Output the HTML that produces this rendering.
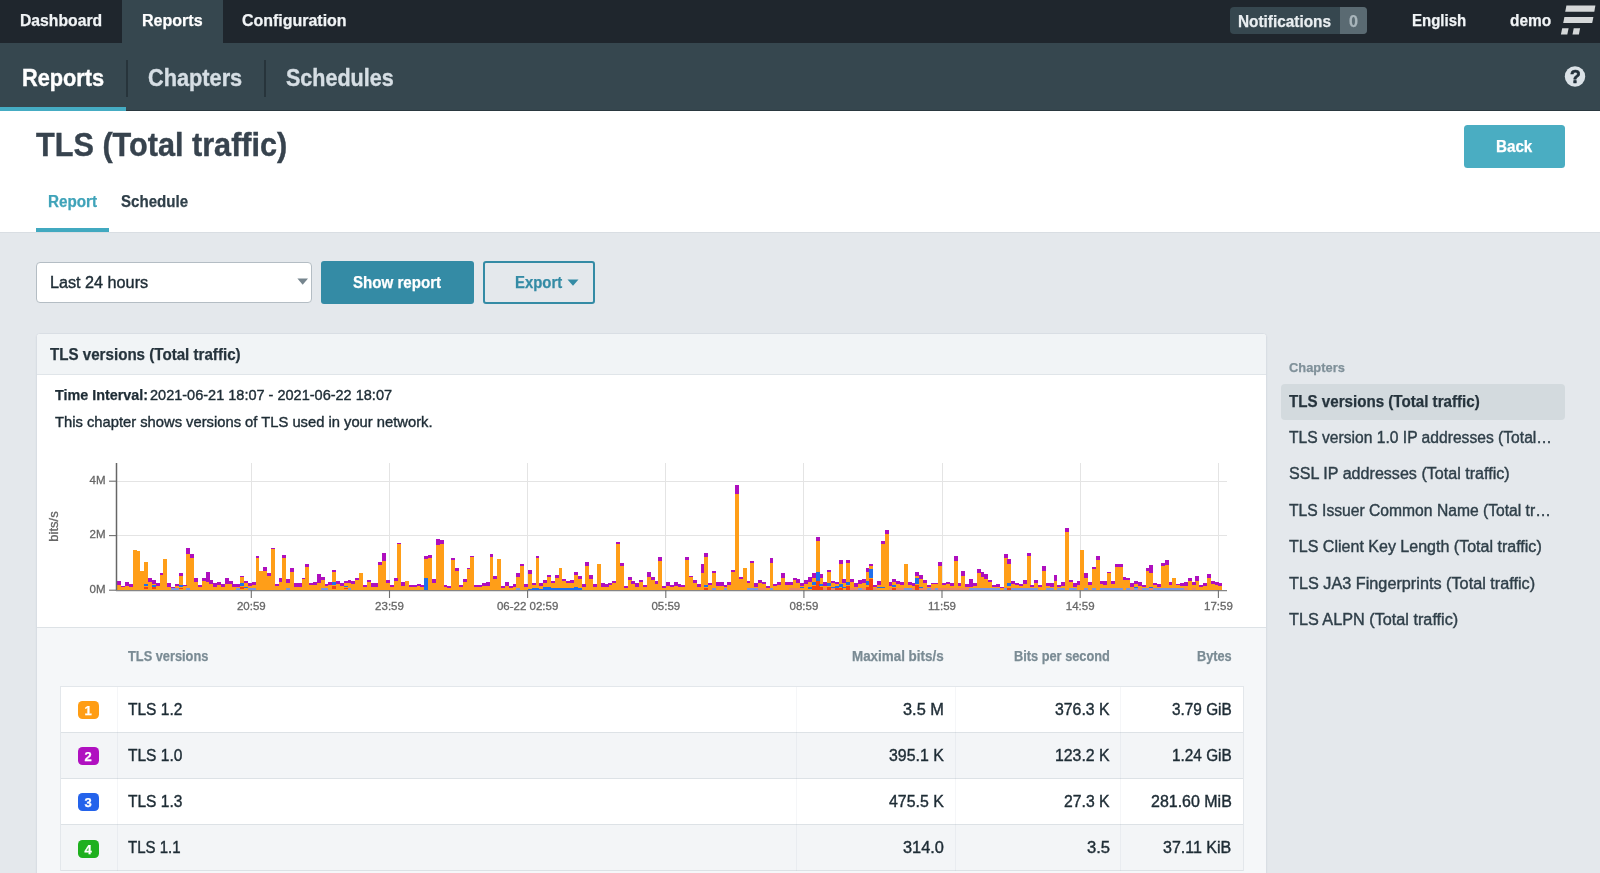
<!DOCTYPE html>
<html lang="en">
<head>
<meta charset="utf-8">
<title>TLS (Total traffic)</title>
<style>
*{box-sizing:border-box;margin:0;padding:0}
html,body{width:1600px;height:873px;overflow:hidden}
body{position:relative;background:#e4e8ec;font-family:"Liberation Sans",sans-serif;color:#2f3f49}
.a{position:absolute}
.t{position:absolute;white-space:nowrap;line-height:normal;transform-origin:0 0;font-family:"Liberation Sans",sans-serif}
#top{left:0;top:0;width:1600px;height:43px;background:#1f262d}
#top-act{left:122px;top:0;width:100.5px;height:43px;background:#36474f}
#notif{left:1229.5px;top:7px;width:137.5px;height:26.5px;border-radius:4px;background:#36474f;overflow:hidden}
#notif i{position:absolute;left:110.5px;top:0;width:27px;height:27px;background:#5a6a72}
#sub{left:0;top:43px;width:1600px;height:67.5px;background:#36474f;box-shadow:inset 0 -1px 0 #2a383f}
#sub-ul{left:0;top:107px;width:126px;height:3.5px;background:#45acc3}
.dv{top:60px;width:2px;height:37px;background:#27343b}
#hd{left:0;top:110.5px;width:1600px;height:122px;background:#fff;border-bottom:1px solid #d9dee3}
#back{left:1464px;top:125px;width:101px;height:43px;border-radius:3.5px;background:#4aadc2}
#tab-ul{left:36px;top:228px;width:73px;height:4px;background:#41a9c0}
#sel{left:36px;top:262px;width:276px;height:40.5px;border:1px solid #b4bdc4;border-radius:4px;background:#fff}
#show{left:321px;top:261px;width:153px;height:43px;border-radius:3px;background:#348ba5}
#exp{left:483px;top:261px;width:111.5px;height:43px;border-radius:3px;border:2px solid #348ba5;background:transparent}
#panel{left:36px;top:333px;width:1230.5px;height:560px;border:1px solid #d9dee4;border-radius:4px;background:#fff;overflow:hidden;box-shadow:0 1px 2px rgba(40,60,70,.06)}
#phead{left:0;top:0;width:1230px;height:41px;background:#f1f4f6;border-bottom:1px solid #e0e5e9}
#tarea{left:0;top:293px;width:1230px;height:300px;background:#f5f7f9;border-top:1.5px solid #dde2e6}
#tbl{left:60px;top:686px;width:1183.5px;height:185px;border:1px solid #e3e7eb;border-bottom:0;background:#fff}
.row{left:0;width:100%;height:46px;border-bottom:1px solid #dde2e6}
.alt{background:#f3f5f7}
.cs{top:0;width:1px;height:184px;background:rgba(120,140,155,.075)}
.bdg{width:21px;height:18px;border-radius:4.5px}
#side-act{left:1280.5px;top:383.5px;width:284.5px;height:36px;border-radius:4px;background:#d3dade}
</style>
</head>
<body>
<div class="a" id="top"></div>
<div class="a" id="top-act"></div>
<div class="a" id="notif"><i></i></div>
<svg class="a" style="left:1558px;top:3px" width="40" height="34" viewBox="0 0 40 34">
  <g fill="#d5d8d9">
    <polygon points="8.4,2.4 37.4,2.4 36.3,8.8 7.2,8.8"/>
    <polygon points="6.4,14 35.4,14 34.2,19.9 5.2,19.9"/>
    <polygon points="4.2,25.3 10.6,25.3 9.3,31.5 2.9,31.5"/>
    <polygon points="15.7,25.3 22.1,25.3 20.9,31.5 14.5,31.5"/>
  </g>
</svg>
<div class="a" id="sub"></div>
<div class="a" id="sub-ul"></div>
<div class="a dv" style="left:126px"></div>
<div class="a dv" style="left:264px"></div>
<svg class="a" style="left:1564px;top:66px;will-change:transform" width="22" height="22" viewBox="0 0 22 22">
  <circle cx="11" cy="10.5" r="10.2" fill="#dbe2e7"/>
  <text x="11.3" y="17" text-anchor="middle" font-family="Liberation Sans, sans-serif" font-weight="bold" font-size="17.5" fill="#22303a" stroke="#22303a" stroke-width="0.7" stroke-linejoin="round">?</text>
</svg>
<div class="a" id="hd"></div>
<div class="a" id="back"></div>
<div class="a" id="tab-ul"></div>
<div class="a" id="sel"></div>
<svg class="a" style="left:297px;top:278px" width="12" height="8" viewBox="0 0 12 8"><polygon points="0.4,0.6 11,0.6 5.7,6.7" fill="#76858e"/></svg>
<div class="a" id="show"></div>
<div class="a" id="exp"></div>
<svg class="a" style="left:566.5px;top:279px" width="12" height="8" viewBox="0 0 12 8"><polygon points="0.5,0.4 11.5,0.4 6,6.8" fill="#348ba5"/></svg>
<div class="a" id="panel">
  <div class="a" id="phead"></div>
  <div class="a" id="tarea"></div>
</div>
<div class="a" id="tbl">
  <div class="a row" style="top:0"></div>
  <div class="a row alt" style="top:46px"></div>
  <div class="a row" style="top:92px"></div>
  <div class="a row alt" style="top:138px"></div>
  <div class="a cs" style="left:55.5px"></div>
  <div class="a cs" style="left:734.5px"></div>
  <div class="a cs" style="left:893.5px"></div>
  <div class="a cs" style="left:1059px"></div>
</div>
<div class="a bdg" style="left:77.7px;top:701px;background:#ff9d14"></div>
<div class="a bdg" style="left:77.7px;top:747px;background:#b010c0"></div>
<div class="a bdg" style="left:77.7px;top:793px;background:#2463eb"></div>
<div class="a bdg" style="left:77.7px;top:839.5px;background:#1eb01e"></div>
<div class="a" id="side-act"></div>
<svg class="a" style="left:36px;top:450px;will-change:transform" width="1234" height="176" viewBox="36 450 1234 176" shape-rendering="crispEdges"><path d="M251.3 463V590" stroke="#e4e4e4" stroke-width="1"/><path d="M389.5 463V590" stroke="#e4e4e4" stroke-width="1"/><path d="M527.6 463V590" stroke="#e4e4e4" stroke-width="1"/><path d="M665.8 463V590" stroke="#e4e4e4" stroke-width="1"/><path d="M803.9 463V590" stroke="#e4e4e4" stroke-width="1"/><path d="M942.0 463V590" stroke="#e4e4e4" stroke-width="1"/><path d="M1080.2 463V590" stroke="#e4e4e4" stroke-width="1"/><path d="M1218.4 463V590" stroke="#e4e4e4" stroke-width="1"/><path d="M116 481.2H1227" stroke="#e4e4e4" stroke-width="1"/><path d="M116 535.6H1227" stroke="#e4e4e4" stroke-width="1"/><g><rect x="117.40" y="585.00" width="3.89" height="5.00" fill="#ff9e18"/><rect x="121.24" y="586.88" width="3.89" height="3.12" fill="#ff9e18"/><rect x="125.07" y="585.62" width="3.89" height="4.38" fill="#ff9e18"/><rect x="128.91" y="586.88" width="3.89" height="3.12" fill="#ff9e18"/><rect x="132.75" y="550.00" width="3.89" height="40.00" fill="#ff9e18"/><rect x="136.58" y="551.25" width="3.89" height="38.75" fill="#ff9e18"/><rect x="140.42" y="570.62" width="3.89" height="19.38" fill="#ff9e18"/><rect x="144.26" y="561.50" width="3.89" height="28.50" fill="#ff9e18"/><rect x="148.09" y="581.88" width="3.89" height="8.12" fill="#ff9e18"/><rect x="151.93" y="583.75" width="3.89" height="6.25" fill="#ff9e18"/><rect x="155.76" y="586.25" width="3.89" height="3.75" fill="#ff9e18"/><rect x="159.60" y="574.62" width="3.89" height="15.38" fill="#ff9e18"/><rect x="163.44" y="559.38" width="3.89" height="30.62" fill="#ff9e18"/><rect x="167.27" y="586.88" width="3.89" height="3.12" fill="#ff9e18"/><rect x="171.11" y="587.50" width="3.89" height="2.50" fill="#ff9e18"/><rect x="174.95" y="586.25" width="3.89" height="3.75" fill="#ff9e18"/><rect x="178.78" y="576.25" width="3.89" height="13.75" fill="#ff9e18"/><rect x="182.62" y="586.25" width="3.89" height="3.75" fill="#ff9e18"/><rect x="186.46" y="553.50" width="3.89" height="36.50" fill="#ff9e18"/><rect x="190.29" y="558.12" width="3.89" height="31.88" fill="#ff9e18"/><rect x="194.13" y="581.88" width="3.89" height="8.12" fill="#ff9e18"/><rect x="197.97" y="587.12" width="3.89" height="2.88" fill="#ff9e18"/><rect x="201.80" y="580.62" width="3.89" height="9.38" fill="#ff9e18"/><rect x="205.64" y="581.88" width="3.89" height="8.12" fill="#ff9e18"/><rect x="209.47" y="583.75" width="3.89" height="6.25" fill="#ff9e18"/><rect x="213.31" y="586.88" width="3.89" height="3.12" fill="#ff9e18"/><rect x="217.15" y="585.00" width="3.89" height="5.00" fill="#ff9e18"/><rect x="220.98" y="586.88" width="3.89" height="3.12" fill="#ff9e18"/><rect x="224.82" y="584.38" width="3.89" height="5.62" fill="#ff9e18"/><rect x="228.66" y="584.38" width="3.89" height="5.62" fill="#ff9e18"/><rect x="232.49" y="586.88" width="3.89" height="3.12" fill="#ff9e18"/><rect x="236.33" y="586.88" width="3.89" height="3.12" fill="#ff9e18"/><rect x="240.17" y="576.88" width="3.89" height="13.12" fill="#ff9e18"/><rect x="244.00" y="583.12" width="3.89" height="6.88" fill="#ff9e18"/><rect x="247.84" y="585.62" width="3.89" height="4.38" fill="#ff9e18"/><rect x="251.68" y="585.00" width="3.89" height="5.00" fill="#ff9e18"/><rect x="255.51" y="557.88" width="3.89" height="32.12" fill="#ff9e18"/><rect x="259.35" y="570.62" width="3.89" height="19.38" fill="#ff9e18"/><rect x="263.19" y="570.62" width="3.89" height="19.38" fill="#ff9e18"/><rect x="267.02" y="575.88" width="3.89" height="14.12" fill="#ff9e18"/><rect x="270.86" y="548.75" width="3.89" height="41.25" fill="#ff9e18"/><rect x="274.69" y="586.25" width="3.89" height="3.75" fill="#ff9e18"/><rect x="278.53" y="581.88" width="3.89" height="8.12" fill="#ff9e18"/><rect x="282.37" y="557.88" width="3.89" height="32.12" fill="#ff9e18"/><rect x="286.20" y="583.12" width="3.89" height="6.88" fill="#ff9e18"/><rect x="290.04" y="571.50" width="3.89" height="18.50" fill="#ff9e18"/><rect x="293.88" y="586.88" width="3.89" height="3.12" fill="#ff9e18"/><rect x="297.71" y="586.88" width="3.89" height="3.12" fill="#ff9e18"/><rect x="301.55" y="579.38" width="3.89" height="10.62" fill="#ff9e18"/><rect x="305.39" y="566.88" width="3.89" height="23.12" fill="#ff9e18"/><rect x="309.22" y="585.00" width="3.89" height="5.00" fill="#ff9e18"/><rect x="313.06" y="585.00" width="3.89" height="5.00" fill="#ff9e18"/><rect x="316.90" y="583.12" width="3.89" height="6.88" fill="#ff9e18"/><rect x="320.73" y="580.00" width="3.89" height="10.00" fill="#ff9e18"/><rect x="324.57" y="585.62" width="3.89" height="4.38" fill="#ff9e18"/><rect x="328.41" y="585.00" width="3.89" height="5.00" fill="#ff9e18"/><rect x="332.24" y="571.88" width="3.89" height="18.12" fill="#ff9e18"/><rect x="336.08" y="584.38" width="3.89" height="5.62" fill="#ff9e18"/><rect x="339.91" y="585.62" width="3.89" height="4.38" fill="#ff9e18"/><rect x="343.75" y="583.12" width="3.89" height="6.88" fill="#ff9e18"/><rect x="347.59" y="583.12" width="3.89" height="6.88" fill="#ff9e18"/><rect x="351.42" y="583.75" width="3.89" height="6.25" fill="#ff9e18"/><rect x="355.26" y="579.62" width="3.89" height="10.38" fill="#ff9e18"/><rect x="359.10" y="573.12" width="3.89" height="16.88" fill="#ff9e18"/><rect x="362.93" y="586.88" width="3.89" height="3.12" fill="#ff9e18"/><rect x="366.77" y="581.88" width="3.89" height="8.12" fill="#ff9e18"/><rect x="370.61" y="586.88" width="3.89" height="3.12" fill="#ff9e18"/><rect x="374.44" y="586.88" width="3.89" height="3.12" fill="#ff9e18"/><rect x="378.28" y="564.62" width="3.89" height="25.38" fill="#ff9e18"/><rect x="382.12" y="561.25" width="3.89" height="28.75" fill="#ff9e18"/><rect x="385.95" y="583.12" width="3.89" height="6.88" fill="#ff9e18"/><rect x="389.79" y="587.12" width="3.89" height="2.88" fill="#ff9e18"/><rect x="393.62" y="580.88" width="3.89" height="9.12" fill="#ff9e18"/><rect x="397.46" y="544.38" width="3.89" height="45.62" fill="#ff9e18"/><rect x="401.30" y="586.25" width="3.89" height="3.75" fill="#ff9e18"/><rect x="405.13" y="581.25" width="3.89" height="8.75" fill="#ff9e18"/><rect x="408.97" y="587.12" width="3.89" height="2.88" fill="#ff9e18"/><rect x="412.81" y="587.12" width="3.89" height="2.88" fill="#ff9e18"/><rect x="416.64" y="586.25" width="3.89" height="3.75" fill="#ff9e18"/><rect x="420.48" y="586.88" width="3.89" height="3.12" fill="#ff9e18"/><rect x="424.32" y="559.38" width="3.89" height="30.62" fill="#ff9e18"/><rect x="428.15" y="558.12" width="3.89" height="31.88" fill="#ff9e18"/><rect x="431.99" y="582.50" width="3.89" height="7.50" fill="#ff9e18"/><rect x="435.83" y="545.38" width="3.89" height="44.62" fill="#ff9e18"/><rect x="439.66" y="544.12" width="3.89" height="45.88" fill="#ff9e18"/><rect x="443.50" y="586.88" width="3.89" height="3.12" fill="#ff9e18"/><rect x="447.34" y="587.50" width="3.89" height="2.50" fill="#ff9e18"/><rect x="451.17" y="560.38" width="3.89" height="29.62" fill="#ff9e18"/><rect x="455.01" y="571.25" width="3.89" height="18.75" fill="#ff9e18"/><rect x="458.84" y="586.88" width="3.89" height="3.12" fill="#ff9e18"/><rect x="462.68" y="581.88" width="3.89" height="8.12" fill="#ff9e18"/><rect x="466.52" y="568.75" width="3.89" height="21.25" fill="#ff9e18"/><rect x="470.35" y="556.88" width="3.89" height="33.12" fill="#ff9e18"/><rect x="474.19" y="586.88" width="3.89" height="3.12" fill="#ff9e18"/><rect x="478.03" y="586.88" width="3.89" height="3.12" fill="#ff9e18"/><rect x="481.86" y="585.62" width="3.89" height="4.38" fill="#ff9e18"/><rect x="485.70" y="585.62" width="3.89" height="4.38" fill="#ff9e18"/><rect x="489.54" y="556.88" width="3.89" height="33.12" fill="#ff9e18"/><rect x="493.37" y="579.38" width="3.89" height="10.62" fill="#ff9e18"/><rect x="497.21" y="559.38" width="3.89" height="30.62" fill="#ff9e18"/><rect x="501.05" y="587.50" width="3.89" height="2.50" fill="#ff9e18"/><rect x="504.88" y="585.62" width="3.89" height="4.38" fill="#ff9e18"/><rect x="508.72" y="587.50" width="3.89" height="2.50" fill="#ff9e18"/><rect x="512.56" y="586.88" width="3.89" height="3.12" fill="#ff9e18"/><rect x="516.39" y="576.88" width="3.89" height="13.12" fill="#ff9e18"/><rect x="520.23" y="565.62" width="3.89" height="24.38" fill="#ff9e18"/><rect x="524.06" y="586.88" width="3.89" height="3.12" fill="#ff9e18"/><rect x="527.90" y="573.75" width="3.89" height="16.25" fill="#ff9e18"/><rect x="531.74" y="585.00" width="3.89" height="5.00" fill="#ff9e18"/><rect x="535.57" y="557.88" width="3.89" height="32.12" fill="#ff9e18"/><rect x="539.41" y="586.25" width="3.89" height="3.75" fill="#ff9e18"/><rect x="543.25" y="583.12" width="3.89" height="6.88" fill="#ff9e18"/><rect x="547.08" y="577.12" width="3.89" height="12.88" fill="#ff9e18"/><rect x="550.92" y="582.88" width="3.89" height="7.12" fill="#ff9e18"/><rect x="554.76" y="578.12" width="3.89" height="11.88" fill="#ff9e18"/><rect x="558.59" y="567.50" width="3.89" height="22.50" fill="#ff9e18"/><rect x="562.43" y="580.62" width="3.89" height="9.38" fill="#ff9e18"/><rect x="566.27" y="583.38" width="3.89" height="6.62" fill="#ff9e18"/><rect x="570.10" y="582.50" width="3.89" height="7.50" fill="#ff9e18"/><rect x="573.94" y="574.62" width="3.89" height="15.38" fill="#ff9e18"/><rect x="577.77" y="579.38" width="3.89" height="10.62" fill="#ff9e18"/><rect x="581.61" y="586.88" width="3.89" height="3.12" fill="#ff9e18"/><rect x="585.45" y="565.62" width="3.89" height="24.38" fill="#ff9e18"/><rect x="589.28" y="579.38" width="3.89" height="10.62" fill="#ff9e18"/><rect x="593.12" y="586.88" width="3.89" height="3.12" fill="#ff9e18"/><rect x="596.96" y="564.00" width="3.89" height="26.00" fill="#ff9e18"/><rect x="600.79" y="586.62" width="3.89" height="3.38" fill="#ff9e18"/><rect x="604.63" y="586.62" width="3.89" height="3.38" fill="#ff9e18"/><rect x="608.47" y="585.00" width="3.89" height="5.00" fill="#ff9e18"/><rect x="612.30" y="583.12" width="3.89" height="6.88" fill="#ff9e18"/><rect x="616.14" y="544.38" width="3.89" height="45.62" fill="#ff9e18"/><rect x="619.98" y="565.62" width="3.89" height="24.38" fill="#ff9e18"/><rect x="623.81" y="587.50" width="3.89" height="2.50" fill="#ff9e18"/><rect x="627.65" y="579.62" width="3.89" height="10.38" fill="#ff9e18"/><rect x="631.49" y="584.38" width="3.89" height="5.62" fill="#ff9e18"/><rect x="635.32" y="586.62" width="3.89" height="3.38" fill="#ff9e18"/><rect x="639.16" y="581.88" width="3.89" height="8.12" fill="#ff9e18"/><rect x="642.99" y="587.12" width="3.89" height="2.88" fill="#ff9e18"/><rect x="646.83" y="576.88" width="3.89" height="13.12" fill="#ff9e18"/><rect x="650.67" y="580.00" width="3.89" height="10.00" fill="#ff9e18"/><rect x="654.50" y="583.75" width="3.89" height="6.25" fill="#ff9e18"/><rect x="658.34" y="561.25" width="3.89" height="28.75" fill="#ff9e18"/><rect x="662.18" y="588.12" width="3.89" height="1.88" fill="#ff9e18"/><rect x="666.01" y="585.62" width="3.89" height="4.38" fill="#ff9e18"/><rect x="669.85" y="587.12" width="3.89" height="2.88" fill="#ff9e18"/><rect x="673.69" y="585.62" width="3.89" height="4.38" fill="#ff9e18"/><rect x="677.52" y="586.62" width="3.89" height="3.38" fill="#ff9e18"/><rect x="681.36" y="587.12" width="3.89" height="2.88" fill="#ff9e18"/><rect x="685.20" y="560.38" width="3.89" height="29.62" fill="#ff9e18"/><rect x="689.03" y="576.88" width="3.89" height="13.12" fill="#ff9e18"/><rect x="692.87" y="582.50" width="3.89" height="7.50" fill="#ff9e18"/><rect x="696.71" y="586.88" width="3.89" height="3.12" fill="#ff9e18"/><rect x="700.54" y="572.50" width="3.89" height="17.50" fill="#ff9e18"/><rect x="704.38" y="556.88" width="3.89" height="33.12" fill="#ff9e18"/><rect x="708.21" y="585.00" width="3.89" height="5.00" fill="#ff9e18"/><rect x="712.05" y="573.12" width="3.89" height="16.88" fill="#ff9e18"/><rect x="715.89" y="585.62" width="3.89" height="4.38" fill="#ff9e18"/><rect x="719.72" y="585.62" width="3.89" height="4.38" fill="#ff9e18"/><rect x="723.56" y="586.88" width="3.89" height="3.12" fill="#ff9e18"/><rect x="727.40" y="585.00" width="3.89" height="5.00" fill="#ff9e18"/><rect x="731.23" y="571.62" width="3.89" height="18.38" fill="#ff9e18"/><rect x="735.07" y="493.62" width="3.89" height="96.38" fill="#ff9e18"/><rect x="738.91" y="579.38" width="3.89" height="10.62" fill="#ff9e18"/><rect x="742.74" y="567.50" width="3.89" height="22.50" fill="#ff9e18"/><rect x="746.58" y="582.88" width="3.89" height="7.12" fill="#ff9e18"/><rect x="750.42" y="562.50" width="3.89" height="27.50" fill="#ff9e18"/><rect x="754.25" y="586.88" width="3.89" height="3.12" fill="#ff9e18"/><rect x="758.09" y="582.88" width="3.89" height="7.12" fill="#ff9e18"/><rect x="761.92" y="583.75" width="3.89" height="6.25" fill="#ff9e18"/><rect x="765.76" y="587.50" width="3.89" height="2.50" fill="#ff9e18"/><rect x="769.60" y="562.50" width="3.89" height="27.50" fill="#ff9e18"/><rect x="773.43" y="585.62" width="3.89" height="4.38" fill="#ff9e18"/><rect x="777.27" y="585.00" width="3.89" height="5.00" fill="#ff9e18"/><rect x="781.11" y="577.50" width="3.89" height="12.50" fill="#ff9e18"/><rect x="784.94" y="585.00" width="3.89" height="5.00" fill="#ff9e18"/><rect x="788.78" y="585.00" width="3.89" height="5.00" fill="#ff9e18"/><rect x="792.62" y="579.62" width="3.89" height="10.38" fill="#ff9e18"/><rect x="796.45" y="583.12" width="3.89" height="6.88" fill="#ff9e18"/><rect x="800.29" y="585.62" width="3.89" height="4.38" fill="#ff9e18"/><rect x="804.13" y="583.75" width="3.89" height="6.25" fill="#ff9e18"/><rect x="807.96" y="581.88" width="3.89" height="8.12" fill="#ff9e18"/><rect x="811.80" y="577.50" width="3.89" height="12.50" fill="#ff9e18"/><rect x="815.64" y="541.25" width="3.89" height="48.75" fill="#ff9e18"/><rect x="819.47" y="578.12" width="3.89" height="11.88" fill="#ff9e18"/><rect x="823.31" y="585.62" width="3.89" height="4.38" fill="#ff9e18"/><rect x="827.14" y="571.88" width="3.89" height="18.12" fill="#ff9e18"/><rect x="830.98" y="583.12" width="3.89" height="6.88" fill="#ff9e18"/><rect x="834.82" y="583.75" width="3.89" height="6.25" fill="#ff9e18"/><rect x="838.65" y="563.75" width="3.89" height="26.25" fill="#ff9e18"/><rect x="842.49" y="582.50" width="3.89" height="7.50" fill="#ff9e18"/><rect x="846.33" y="562.50" width="3.89" height="27.50" fill="#ff9e18"/><rect x="850.16" y="581.88" width="3.89" height="8.12" fill="#ff9e18"/><rect x="854.00" y="586.62" width="3.89" height="3.38" fill="#ff9e18"/><rect x="857.84" y="583.75" width="3.89" height="6.25" fill="#ff9e18"/><rect x="861.67" y="583.12" width="3.89" height="6.88" fill="#ff9e18"/><rect x="865.51" y="571.62" width="3.89" height="18.38" fill="#ff9e18"/><rect x="869.35" y="565.62" width="3.89" height="24.38" fill="#ff9e18"/><rect x="873.18" y="586.62" width="3.89" height="3.38" fill="#ff9e18"/><rect x="877.02" y="585.00" width="3.89" height="5.00" fill="#ff9e18"/><rect x="880.86" y="544.38" width="3.89" height="45.62" fill="#ff9e18"/><rect x="884.69" y="534.38" width="3.89" height="55.62" fill="#ff9e18"/><rect x="888.53" y="585.62" width="3.89" height="4.38" fill="#ff9e18"/><rect x="892.36" y="581.88" width="3.89" height="8.12" fill="#ff9e18"/><rect x="896.20" y="583.75" width="3.89" height="6.25" fill="#ff9e18"/><rect x="900.04" y="585.00" width="3.89" height="5.00" fill="#ff9e18"/><rect x="903.87" y="564.00" width="3.89" height="26.00" fill="#ff9e18"/><rect x="907.71" y="585.00" width="3.89" height="5.00" fill="#ff9e18"/><rect x="911.55" y="585.62" width="3.89" height="4.38" fill="#ff9e18"/><rect x="915.38" y="576.25" width="3.89" height="13.75" fill="#ff9e18"/><rect x="919.22" y="578.75" width="3.89" height="11.25" fill="#ff9e18"/><rect x="923.06" y="583.12" width="3.89" height="6.88" fill="#ff9e18"/><rect x="926.89" y="586.88" width="3.89" height="3.12" fill="#ff9e18"/><rect x="930.73" y="584.38" width="3.89" height="5.62" fill="#ff9e18"/><rect x="934.57" y="584.38" width="3.89" height="5.62" fill="#ff9e18"/><rect x="938.40" y="566.25" width="3.89" height="23.75" fill="#ff9e18"/><rect x="942.24" y="585.00" width="3.89" height="5.00" fill="#ff9e18"/><rect x="946.07" y="583.75" width="3.89" height="6.25" fill="#ff9e18"/><rect x="949.91" y="586.25" width="3.89" height="3.75" fill="#ff9e18"/><rect x="953.75" y="560.62" width="3.89" height="29.38" fill="#ff9e18"/><rect x="957.58" y="586.25" width="3.89" height="3.75" fill="#ff9e18"/><rect x="961.42" y="576.25" width="3.89" height="13.75" fill="#ff9e18"/><rect x="965.26" y="587.12" width="3.89" height="2.88" fill="#ff9e18"/><rect x="969.09" y="586.62" width="3.89" height="3.38" fill="#ff9e18"/><rect x="972.93" y="586.25" width="3.89" height="3.75" fill="#ff9e18"/><rect x="976.77" y="572.75" width="3.89" height="17.25" fill="#ff9e18"/><rect x="980.60" y="576.88" width="3.89" height="13.12" fill="#ff9e18"/><rect x="984.44" y="578.75" width="3.89" height="11.25" fill="#ff9e18"/><rect x="988.28" y="581.88" width="3.89" height="8.12" fill="#ff9e18"/><rect x="992.11" y="586.62" width="3.89" height="3.38" fill="#ff9e18"/><rect x="995.95" y="587.12" width="3.89" height="2.88" fill="#ff9e18"/><rect x="999.79" y="587.88" width="3.89" height="2.12" fill="#ff9e18"/><rect x="1003.62" y="558.12" width="3.89" height="31.88" fill="#ff9e18"/><rect x="1007.46" y="563.75" width="3.89" height="26.25" fill="#ff9e18"/><rect x="1011.29" y="584.38" width="3.89" height="5.62" fill="#ff9e18"/><rect x="1015.13" y="585.25" width="3.89" height="4.75" fill="#ff9e18"/><rect x="1018.97" y="585.62" width="3.89" height="4.38" fill="#ff9e18"/><rect x="1022.80" y="583.75" width="3.89" height="6.25" fill="#ff9e18"/><rect x="1026.64" y="555.88" width="3.89" height="34.12" fill="#ff9e18"/><rect x="1030.48" y="586.88" width="3.89" height="3.12" fill="#ff9e18"/><rect x="1034.31" y="583.12" width="3.89" height="6.88" fill="#ff9e18"/><rect x="1038.15" y="586.62" width="3.89" height="3.38" fill="#ff9e18"/><rect x="1041.99" y="570.62" width="3.89" height="19.38" fill="#ff9e18"/><rect x="1045.82" y="586.25" width="3.89" height="3.75" fill="#ff9e18"/><rect x="1049.66" y="586.62" width="3.89" height="3.38" fill="#ff9e18"/><rect x="1053.50" y="580.62" width="3.89" height="9.38" fill="#ff9e18"/><rect x="1057.33" y="586.62" width="3.89" height="3.38" fill="#ff9e18"/><rect x="1061.17" y="585.62" width="3.89" height="4.38" fill="#ff9e18"/><rect x="1065.01" y="532.12" width="3.89" height="57.88" fill="#ff9e18"/><rect x="1068.84" y="581.88" width="3.89" height="8.12" fill="#ff9e18"/><rect x="1072.68" y="586.88" width="3.89" height="3.12" fill="#ff9e18"/><rect x="1076.51" y="585.00" width="3.89" height="5.00" fill="#ff9e18"/><rect x="1080.35" y="550.00" width="3.89" height="40.00" fill="#ff9e18"/><rect x="1084.19" y="577.50" width="3.89" height="12.50" fill="#ff9e18"/><rect x="1088.02" y="585.00" width="3.89" height="5.00" fill="#ff9e18"/><rect x="1091.86" y="569.38" width="3.89" height="20.62" fill="#ff9e18"/><rect x="1095.70" y="560.38" width="3.89" height="29.62" fill="#ff9e18"/><rect x="1099.53" y="584.38" width="3.89" height="5.62" fill="#ff9e18"/><rect x="1103.37" y="585.00" width="3.89" height="5.00" fill="#ff9e18"/><rect x="1107.21" y="572.75" width="3.89" height="17.25" fill="#ff9e18"/><rect x="1111.04" y="584.38" width="3.89" height="5.62" fill="#ff9e18"/><rect x="1114.88" y="566.88" width="3.89" height="23.12" fill="#ff9e18"/><rect x="1118.72" y="566.88" width="3.89" height="23.12" fill="#ff9e18"/><rect x="1122.55" y="580.00" width="3.89" height="10.00" fill="#ff9e18"/><rect x="1126.39" y="580.00" width="3.89" height="10.00" fill="#ff9e18"/><rect x="1130.22" y="586.88" width="3.89" height="3.12" fill="#ff9e18"/><rect x="1134.06" y="584.38" width="3.89" height="5.62" fill="#ff9e18"/><rect x="1137.90" y="585.62" width="3.89" height="4.38" fill="#ff9e18"/><rect x="1141.73" y="587.12" width="3.89" height="2.88" fill="#ff9e18"/><rect x="1145.57" y="571.25" width="3.89" height="18.75" fill="#ff9e18"/><rect x="1149.41" y="572.50" width="3.89" height="17.50" fill="#ff9e18"/><rect x="1153.24" y="585.00" width="3.89" height="5.00" fill="#ff9e18"/><rect x="1157.08" y="586.62" width="3.89" height="3.38" fill="#ff9e18"/><rect x="1160.92" y="565.62" width="3.89" height="24.38" fill="#ff9e18"/><rect x="1164.75" y="564.62" width="3.89" height="25.38" fill="#ff9e18"/><rect x="1168.59" y="585.00" width="3.89" height="5.00" fill="#ff9e18"/><rect x="1172.43" y="577.75" width="3.89" height="12.25" fill="#ff9e18"/><rect x="1176.26" y="585.25" width="3.89" height="4.75" fill="#ff9e18"/><rect x="1180.10" y="586.25" width="3.89" height="3.75" fill="#ff9e18"/><rect x="1183.94" y="585.62" width="3.89" height="4.38" fill="#ff9e18"/><rect x="1187.77" y="580.62" width="3.89" height="9.38" fill="#ff9e18"/><rect x="1191.61" y="585.25" width="3.89" height="4.75" fill="#ff9e18"/><rect x="1195.44" y="580.62" width="3.89" height="9.38" fill="#ff9e18"/><rect x="1199.28" y="587.12" width="3.89" height="2.88" fill="#ff9e18"/><rect x="1203.12" y="586.25" width="3.89" height="3.75" fill="#ff9e18"/><rect x="1206.95" y="578.38" width="3.89" height="11.62" fill="#ff9e18"/><rect x="1210.79" y="584.38" width="3.89" height="5.62" fill="#ff9e18"/><rect x="1214.63" y="585.00" width="3.89" height="5.00" fill="#ff9e18"/><rect x="1218.46" y="585.62" width="3.89" height="4.38" fill="#ff9e18"/><rect x="117.40" y="580.88" width="3.89" height="4.12" fill="#ae0fbe"/><rect x="121.24" y="585.62" width="3.89" height="1.25" fill="#ae0fbe"/><rect x="125.07" y="581.88" width="3.89" height="3.75" fill="#ae0fbe"/><rect x="128.91" y="584.38" width="3.89" height="2.50" fill="#ae0fbe"/><rect x="148.09" y="577.50" width="3.89" height="4.38" fill="#ae0fbe"/><rect x="151.93" y="579.62" width="3.89" height="4.12" fill="#ae0fbe"/><rect x="155.76" y="583.12" width="3.89" height="3.12" fill="#ae0fbe"/><rect x="159.60" y="572.75" width="3.89" height="1.88" fill="#ae0fbe"/><rect x="167.27" y="583.12" width="3.89" height="3.75" fill="#ae0fbe"/><rect x="171.11" y="586.62" width="3.89" height="0.88" fill="#ae0fbe"/><rect x="174.95" y="584.38" width="3.89" height="1.88" fill="#ae0fbe"/><rect x="178.78" y="572.75" width="3.89" height="3.50" fill="#ae0fbe"/><rect x="182.62" y="585.00" width="3.89" height="1.25" fill="#ae0fbe"/><rect x="186.46" y="547.75" width="3.89" height="5.75" fill="#ae0fbe"/><rect x="190.29" y="553.50" width="3.89" height="4.62" fill="#ae0fbe"/><rect x="194.13" y="577.50" width="3.89" height="4.38" fill="#ae0fbe"/><rect x="197.97" y="585.00" width="3.89" height="2.12" fill="#ae0fbe"/><rect x="201.80" y="577.50" width="3.89" height="3.12" fill="#ae0fbe"/><rect x="205.64" y="571.50" width="3.89" height="10.38" fill="#ae0fbe"/><rect x="209.47" y="579.62" width="3.89" height="4.12" fill="#ae0fbe"/><rect x="213.31" y="583.38" width="3.89" height="3.50" fill="#ae0fbe"/><rect x="217.15" y="581.88" width="3.89" height="3.12" fill="#ae0fbe"/><rect x="220.98" y="584.38" width="3.89" height="2.50" fill="#ae0fbe"/><rect x="224.82" y="578.38" width="3.89" height="6.00" fill="#ae0fbe"/><rect x="228.66" y="580.88" width="3.89" height="3.50" fill="#ae0fbe"/><rect x="232.49" y="584.38" width="3.89" height="2.50" fill="#ae0fbe"/><rect x="236.33" y="584.38" width="3.89" height="2.50" fill="#ae0fbe"/><rect x="240.17" y="575.88" width="3.89" height="1.00" fill="#ae0fbe"/><rect x="244.00" y="580.88" width="3.89" height="2.25" fill="#ae0fbe"/><rect x="247.84" y="583.12" width="3.89" height="2.50" fill="#ae0fbe"/><rect x="251.68" y="581.88" width="3.89" height="3.12" fill="#ae0fbe"/><rect x="255.51" y="555.62" width="3.89" height="2.25" fill="#ae0fbe"/><rect x="263.19" y="567.12" width="3.89" height="3.50" fill="#ae0fbe"/><rect x="267.02" y="572.75" width="3.89" height="3.12" fill="#ae0fbe"/><rect x="270.86" y="547.75" width="3.89" height="1.00" fill="#ae0fbe"/><rect x="274.69" y="584.38" width="3.89" height="1.88" fill="#ae0fbe"/><rect x="278.53" y="577.50" width="3.89" height="4.38" fill="#ae0fbe"/><rect x="282.37" y="554.62" width="3.89" height="3.25" fill="#ae0fbe"/><rect x="286.20" y="578.75" width="3.89" height="4.38" fill="#ae0fbe"/><rect x="290.04" y="568.12" width="3.89" height="3.38" fill="#ae0fbe"/><rect x="293.88" y="583.12" width="3.89" height="3.75" fill="#ae0fbe"/><rect x="297.71" y="583.12" width="3.89" height="3.75" fill="#ae0fbe"/><rect x="301.55" y="578.38" width="3.89" height="1.00" fill="#ae0fbe"/><rect x="305.39" y="563.75" width="3.89" height="3.12" fill="#ae0fbe"/><rect x="309.22" y="583.12" width="3.89" height="1.88" fill="#ae0fbe"/><rect x="313.06" y="581.88" width="3.89" height="3.12" fill="#ae0fbe"/><rect x="316.90" y="574.00" width="3.89" height="9.12" fill="#ae0fbe"/><rect x="320.73" y="576.50" width="3.89" height="3.50" fill="#ae0fbe"/><rect x="324.57" y="584.38" width="3.89" height="1.25" fill="#ae0fbe"/><rect x="328.41" y="581.88" width="3.89" height="3.12" fill="#ae0fbe"/><rect x="332.24" y="569.62" width="3.89" height="2.25" fill="#ae0fbe"/><rect x="336.08" y="581.25" width="3.89" height="3.12" fill="#ae0fbe"/><rect x="339.91" y="583.12" width="3.89" height="2.50" fill="#ae0fbe"/><rect x="343.75" y="580.88" width="3.89" height="2.25" fill="#ae0fbe"/><rect x="347.59" y="579.62" width="3.89" height="3.50" fill="#ae0fbe"/><rect x="351.42" y="581.25" width="3.89" height="2.50" fill="#ae0fbe"/><rect x="355.26" y="577.50" width="3.89" height="2.12" fill="#ae0fbe"/><rect x="362.93" y="585.25" width="3.89" height="1.62" fill="#ae0fbe"/><rect x="366.77" y="579.62" width="3.89" height="2.25" fill="#ae0fbe"/><rect x="370.61" y="583.12" width="3.89" height="3.75" fill="#ae0fbe"/><rect x="374.44" y="583.12" width="3.89" height="3.75" fill="#ae0fbe"/><rect x="378.28" y="561.50" width="3.89" height="3.12" fill="#ae0fbe"/><rect x="382.12" y="552.50" width="3.89" height="8.75" fill="#ae0fbe"/><rect x="385.95" y="579.62" width="3.89" height="3.50" fill="#ae0fbe"/><rect x="389.79" y="585.25" width="3.89" height="1.88" fill="#ae0fbe"/><rect x="393.62" y="577.50" width="3.89" height="3.38" fill="#ae0fbe"/><rect x="397.46" y="543.12" width="3.89" height="1.25" fill="#ae0fbe"/><rect x="401.30" y="581.88" width="3.89" height="4.38" fill="#ae0fbe"/><rect x="408.97" y="585.25" width="3.89" height="1.88" fill="#ae0fbe"/><rect x="412.81" y="585.25" width="3.89" height="1.88" fill="#ae0fbe"/><rect x="416.64" y="584.38" width="3.89" height="1.88" fill="#ae0fbe"/><rect x="420.48" y="584.62" width="3.89" height="2.25" fill="#ae0fbe"/><rect x="424.32" y="556.25" width="3.89" height="3.12" fill="#ae0fbe"/><rect x="428.15" y="555.00" width="3.89" height="3.12" fill="#ae0fbe"/><rect x="431.99" y="578.75" width="3.89" height="3.75" fill="#ae0fbe"/><rect x="435.83" y="539.12" width="3.89" height="6.25" fill="#ae0fbe"/><rect x="439.66" y="540.00" width="3.89" height="4.12" fill="#ae0fbe"/><rect x="443.50" y="585.25" width="3.89" height="1.62" fill="#ae0fbe"/><rect x="447.34" y="586.25" width="3.89" height="1.25" fill="#ae0fbe"/><rect x="451.17" y="558.12" width="3.89" height="2.25" fill="#ae0fbe"/><rect x="455.01" y="567.50" width="3.89" height="3.75" fill="#ae0fbe"/><rect x="458.84" y="585.25" width="3.89" height="1.62" fill="#ae0fbe"/><rect x="462.68" y="578.75" width="3.89" height="3.12" fill="#ae0fbe"/><rect x="466.52" y="568.12" width="3.89" height="0.62" fill="#ae0fbe"/><rect x="470.35" y="555.62" width="3.89" height="1.25" fill="#ae0fbe"/><rect x="474.19" y="584.62" width="3.89" height="2.25" fill="#ae0fbe"/><rect x="478.03" y="584.62" width="3.89" height="2.25" fill="#ae0fbe"/><rect x="481.86" y="583.12" width="3.89" height="2.50" fill="#ae0fbe"/><rect x="485.70" y="582.12" width="3.89" height="3.50" fill="#ae0fbe"/><rect x="489.54" y="553.75" width="3.89" height="3.12" fill="#ae0fbe"/><rect x="493.37" y="575.62" width="3.89" height="3.75" fill="#ae0fbe"/><rect x="501.05" y="586.25" width="3.89" height="1.25" fill="#ae0fbe"/><rect x="504.88" y="582.12" width="3.89" height="3.50" fill="#ae0fbe"/><rect x="508.72" y="586.25" width="3.89" height="1.25" fill="#ae0fbe"/><rect x="512.56" y="584.38" width="3.89" height="2.50" fill="#ae0fbe"/><rect x="516.39" y="573.12" width="3.89" height="3.75" fill="#ae0fbe"/><rect x="520.23" y="564.12" width="3.89" height="1.50" fill="#ae0fbe"/><rect x="524.06" y="584.38" width="3.89" height="2.50" fill="#ae0fbe"/><rect x="527.90" y="569.62" width="3.89" height="4.12" fill="#ae0fbe"/><rect x="531.74" y="583.38" width="3.89" height="1.62" fill="#ae0fbe"/><rect x="535.57" y="555.88" width="3.89" height="2.00" fill="#ae0fbe"/><rect x="539.41" y="583.38" width="3.89" height="2.88" fill="#ae0fbe"/><rect x="543.25" y="579.62" width="3.89" height="3.50" fill="#ae0fbe"/><rect x="547.08" y="575.00" width="3.89" height="2.12" fill="#ae0fbe"/><rect x="550.92" y="580.88" width="3.89" height="2.00" fill="#ae0fbe"/><rect x="554.76" y="575.25" width="3.89" height="2.88" fill="#ae0fbe"/><rect x="562.43" y="578.75" width="3.89" height="1.88" fill="#ae0fbe"/><rect x="566.27" y="581.25" width="3.89" height="2.12" fill="#ae0fbe"/><rect x="570.10" y="580.00" width="3.89" height="2.50" fill="#ae0fbe"/><rect x="573.94" y="571.62" width="3.89" height="3.00" fill="#ae0fbe"/><rect x="577.77" y="576.25" width="3.89" height="3.12" fill="#ae0fbe"/><rect x="581.61" y="584.38" width="3.89" height="2.50" fill="#ae0fbe"/><rect x="585.45" y="561.50" width="3.89" height="4.12" fill="#ae0fbe"/><rect x="589.28" y="575.25" width="3.89" height="4.12" fill="#ae0fbe"/><rect x="593.12" y="584.38" width="3.89" height="2.50" fill="#ae0fbe"/><rect x="600.79" y="583.12" width="3.89" height="3.50" fill="#ae0fbe"/><rect x="604.63" y="584.38" width="3.89" height="2.25" fill="#ae0fbe"/><rect x="608.47" y="583.12" width="3.89" height="1.88" fill="#ae0fbe"/><rect x="612.30" y="580.88" width="3.89" height="2.25" fill="#ae0fbe"/><rect x="616.14" y="542.12" width="3.89" height="2.25" fill="#ae0fbe"/><rect x="619.98" y="562.75" width="3.89" height="2.88" fill="#ae0fbe"/><rect x="623.81" y="586.25" width="3.89" height="1.25" fill="#ae0fbe"/><rect x="627.65" y="576.50" width="3.89" height="3.12" fill="#ae0fbe"/><rect x="631.49" y="580.88" width="3.89" height="3.50" fill="#ae0fbe"/><rect x="635.32" y="583.38" width="3.89" height="3.25" fill="#ae0fbe"/><rect x="639.16" y="579.62" width="3.89" height="2.25" fill="#ae0fbe"/><rect x="642.99" y="585.25" width="3.89" height="1.88" fill="#ae0fbe"/><rect x="646.83" y="571.62" width="3.89" height="5.25" fill="#ae0fbe"/><rect x="650.67" y="576.50" width="3.89" height="3.50" fill="#ae0fbe"/><rect x="654.50" y="580.88" width="3.89" height="2.88" fill="#ae0fbe"/><rect x="658.34" y="556.88" width="3.89" height="4.38" fill="#ae0fbe"/><rect x="662.18" y="586.25" width="3.89" height="1.88" fill="#ae0fbe"/><rect x="666.01" y="581.88" width="3.89" height="3.75" fill="#ae0fbe"/><rect x="669.85" y="585.25" width="3.89" height="1.88" fill="#ae0fbe"/><rect x="673.69" y="581.88" width="3.89" height="3.75" fill="#ae0fbe"/><rect x="677.52" y="584.38" width="3.89" height="2.25" fill="#ae0fbe"/><rect x="681.36" y="585.25" width="3.89" height="1.88" fill="#ae0fbe"/><rect x="685.20" y="556.88" width="3.89" height="3.50" fill="#ae0fbe"/><rect x="689.03" y="575.88" width="3.89" height="1.00" fill="#ae0fbe"/><rect x="692.87" y="579.62" width="3.89" height="2.88" fill="#ae0fbe"/><rect x="696.71" y="584.38" width="3.89" height="2.50" fill="#ae0fbe"/><rect x="700.54" y="563.75" width="3.89" height="8.75" fill="#ae0fbe"/><rect x="704.38" y="552.50" width="3.89" height="4.38" fill="#ae0fbe"/><rect x="708.21" y="583.12" width="3.89" height="1.88" fill="#ae0fbe"/><rect x="712.05" y="570.62" width="3.89" height="2.50" fill="#ae0fbe"/><rect x="715.89" y="581.88" width="3.89" height="3.75" fill="#ae0fbe"/><rect x="719.72" y="581.88" width="3.89" height="3.75" fill="#ae0fbe"/><rect x="723.56" y="585.25" width="3.89" height="1.62" fill="#ae0fbe"/><rect x="727.40" y="581.88" width="3.89" height="3.12" fill="#ae0fbe"/><rect x="731.23" y="569.62" width="3.89" height="2.00" fill="#ae0fbe"/><rect x="735.07" y="485.00" width="3.89" height="8.62" fill="#ae0fbe"/><rect x="738.91" y="576.50" width="3.89" height="2.88" fill="#ae0fbe"/><rect x="746.58" y="580.88" width="3.89" height="2.00" fill="#ae0fbe"/><rect x="750.42" y="561.25" width="3.89" height="1.25" fill="#ae0fbe"/><rect x="754.25" y="583.38" width="3.89" height="3.50" fill="#ae0fbe"/><rect x="758.09" y="579.62" width="3.89" height="3.25" fill="#ae0fbe"/><rect x="761.92" y="581.88" width="3.89" height="1.88" fill="#ae0fbe"/><rect x="765.76" y="586.25" width="3.89" height="1.25" fill="#ae0fbe"/><rect x="769.60" y="558.12" width="3.89" height="4.38" fill="#ae0fbe"/><rect x="773.43" y="584.38" width="3.89" height="1.25" fill="#ae0fbe"/><rect x="777.27" y="581.88" width="3.89" height="3.12" fill="#ae0fbe"/><rect x="781.11" y="573.12" width="3.89" height="4.38" fill="#ae0fbe"/><rect x="784.94" y="581.88" width="3.89" height="3.12" fill="#ae0fbe"/><rect x="788.78" y="581.88" width="3.89" height="3.12" fill="#ae0fbe"/><rect x="792.62" y="577.50" width="3.89" height="2.12" fill="#ae0fbe"/><rect x="796.45" y="578.75" width="3.89" height="4.38" fill="#ae0fbe"/><rect x="800.29" y="583.12" width="3.89" height="2.50" fill="#ae0fbe"/><rect x="804.13" y="579.62" width="3.89" height="4.12" fill="#ae0fbe"/><rect x="807.96" y="576.50" width="3.89" height="5.38" fill="#ae0fbe"/><rect x="811.80" y="573.12" width="3.89" height="4.38" fill="#ae0fbe"/><rect x="815.64" y="536.62" width="3.89" height="4.62" fill="#ae0fbe"/><rect x="819.47" y="574.12" width="3.89" height="4.00" fill="#ae0fbe"/><rect x="823.31" y="582.12" width="3.89" height="3.50" fill="#ae0fbe"/><rect x="827.14" y="569.62" width="3.89" height="2.25" fill="#ae0fbe"/><rect x="830.98" y="580.88" width="3.89" height="2.25" fill="#ae0fbe"/><rect x="834.82" y="581.88" width="3.89" height="1.88" fill="#ae0fbe"/><rect x="838.65" y="560.38" width="3.89" height="3.38" fill="#ae0fbe"/><rect x="842.49" y="578.75" width="3.89" height="3.75" fill="#ae0fbe"/><rect x="846.33" y="560.38" width="3.89" height="2.12" fill="#ae0fbe"/><rect x="850.16" y="578.75" width="3.89" height="3.12" fill="#ae0fbe"/><rect x="854.00" y="583.38" width="3.89" height="3.25" fill="#ae0fbe"/><rect x="857.84" y="580.00" width="3.89" height="3.75" fill="#ae0fbe"/><rect x="861.67" y="578.75" width="3.89" height="4.38" fill="#ae0fbe"/><rect x="865.51" y="567.50" width="3.89" height="4.12" fill="#ae0fbe"/><rect x="869.35" y="563.75" width="3.89" height="1.88" fill="#ae0fbe"/><rect x="873.18" y="585.25" width="3.89" height="1.38" fill="#ae0fbe"/><rect x="877.02" y="581.25" width="3.89" height="3.75" fill="#ae0fbe"/><rect x="880.86" y="541.25" width="3.89" height="3.12" fill="#ae0fbe"/><rect x="884.69" y="529.62" width="3.89" height="4.75" fill="#ae0fbe"/><rect x="888.53" y="581.88" width="3.89" height="3.75" fill="#ae0fbe"/><rect x="892.36" y="578.75" width="3.89" height="3.12" fill="#ae0fbe"/><rect x="896.20" y="581.25" width="3.89" height="2.50" fill="#ae0fbe"/><rect x="900.04" y="581.88" width="3.89" height="3.12" fill="#ae0fbe"/><rect x="907.71" y="581.88" width="3.89" height="3.12" fill="#ae0fbe"/><rect x="911.55" y="582.50" width="3.89" height="3.12" fill="#ae0fbe"/><rect x="915.38" y="571.88" width="3.89" height="4.38" fill="#ae0fbe"/><rect x="919.22" y="574.62" width="3.89" height="4.12" fill="#ae0fbe"/><rect x="923.06" y="580.00" width="3.89" height="3.12" fill="#ae0fbe"/><rect x="926.89" y="585.25" width="3.89" height="1.62" fill="#ae0fbe"/><rect x="930.73" y="582.88" width="3.89" height="1.50" fill="#ae0fbe"/><rect x="934.57" y="582.88" width="3.89" height="1.50" fill="#ae0fbe"/><rect x="938.40" y="561.62" width="3.89" height="4.62" fill="#ae0fbe"/><rect x="942.24" y="583.38" width="3.89" height="1.62" fill="#ae0fbe"/><rect x="946.07" y="581.88" width="3.89" height="1.88" fill="#ae0fbe"/><rect x="949.91" y="583.38" width="3.89" height="2.88" fill="#ae0fbe"/><rect x="953.75" y="556.25" width="3.89" height="4.38" fill="#ae0fbe"/><rect x="957.58" y="583.38" width="3.89" height="2.88" fill="#ae0fbe"/><rect x="961.42" y="570.88" width="3.89" height="5.38" fill="#ae0fbe"/><rect x="965.26" y="584.38" width="3.89" height="2.75" fill="#ae0fbe"/><rect x="969.09" y="578.75" width="3.89" height="7.88" fill="#ae0fbe"/><rect x="972.93" y="583.38" width="3.89" height="2.88" fill="#ae0fbe"/><rect x="976.77" y="568.75" width="3.89" height="4.00" fill="#ae0fbe"/><rect x="980.60" y="571.88" width="3.89" height="5.00" fill="#ae0fbe"/><rect x="984.44" y="574.38" width="3.89" height="4.38" fill="#ae0fbe"/><rect x="988.28" y="579.62" width="3.89" height="2.25" fill="#ae0fbe"/><rect x="992.11" y="585.25" width="3.89" height="1.38" fill="#ae0fbe"/><rect x="995.95" y="584.38" width="3.89" height="2.75" fill="#ae0fbe"/><rect x="999.79" y="586.62" width="3.89" height="1.25" fill="#ae0fbe"/><rect x="1003.62" y="553.75" width="3.89" height="4.38" fill="#ae0fbe"/><rect x="1007.46" y="559.38" width="3.89" height="4.38" fill="#ae0fbe"/><rect x="1011.29" y="581.25" width="3.89" height="3.12" fill="#ae0fbe"/><rect x="1015.13" y="583.12" width="3.89" height="2.12" fill="#ae0fbe"/><rect x="1018.97" y="584.38" width="3.89" height="1.25" fill="#ae0fbe"/><rect x="1022.80" y="580.00" width="3.89" height="3.75" fill="#ae0fbe"/><rect x="1026.64" y="552.50" width="3.89" height="3.38" fill="#ae0fbe"/><rect x="1030.48" y="584.62" width="3.89" height="2.25" fill="#ae0fbe"/><rect x="1034.31" y="579.62" width="3.89" height="3.50" fill="#ae0fbe"/><rect x="1038.15" y="584.62" width="3.89" height="2.00" fill="#ae0fbe"/><rect x="1041.99" y="566.25" width="3.89" height="4.38" fill="#ae0fbe"/><rect x="1045.82" y="583.38" width="3.89" height="2.88" fill="#ae0fbe"/><rect x="1049.66" y="583.38" width="3.89" height="3.25" fill="#ae0fbe"/><rect x="1053.50" y="575.25" width="3.89" height="5.38" fill="#ae0fbe"/><rect x="1057.33" y="584.62" width="3.89" height="2.00" fill="#ae0fbe"/><rect x="1061.17" y="582.12" width="3.89" height="3.50" fill="#ae0fbe"/><rect x="1065.01" y="527.50" width="3.89" height="4.62" fill="#ae0fbe"/><rect x="1068.84" y="579.62" width="3.89" height="2.25" fill="#ae0fbe"/><rect x="1072.68" y="583.38" width="3.89" height="3.50" fill="#ae0fbe"/><rect x="1076.51" y="581.25" width="3.89" height="3.75" fill="#ae0fbe"/><rect x="1084.19" y="573.12" width="3.89" height="4.38" fill="#ae0fbe"/><rect x="1088.02" y="581.88" width="3.89" height="3.12" fill="#ae0fbe"/><rect x="1091.86" y="567.12" width="3.89" height="2.25" fill="#ae0fbe"/><rect x="1095.70" y="555.88" width="3.89" height="4.50" fill="#ae0fbe"/><rect x="1099.53" y="581.25" width="3.89" height="3.12" fill="#ae0fbe"/><rect x="1103.37" y="581.25" width="3.89" height="3.75" fill="#ae0fbe"/><rect x="1107.21" y="571.62" width="3.89" height="1.12" fill="#ae0fbe"/><rect x="1111.04" y="580.88" width="3.89" height="3.50" fill="#ae0fbe"/><rect x="1114.88" y="564.12" width="3.89" height="2.75" fill="#ae0fbe"/><rect x="1118.72" y="564.12" width="3.89" height="2.75" fill="#ae0fbe"/><rect x="1122.55" y="576.88" width="3.89" height="3.12" fill="#ae0fbe"/><rect x="1126.39" y="577.75" width="3.89" height="2.25" fill="#ae0fbe"/><rect x="1130.22" y="583.38" width="3.89" height="3.50" fill="#ae0fbe"/><rect x="1134.06" y="581.25" width="3.89" height="3.12" fill="#ae0fbe"/><rect x="1137.90" y="581.88" width="3.89" height="3.75" fill="#ae0fbe"/><rect x="1141.73" y="585.25" width="3.89" height="1.88" fill="#ae0fbe"/><rect x="1145.57" y="567.50" width="3.89" height="3.75" fill="#ae0fbe"/><rect x="1149.41" y="565.00" width="3.89" height="7.50" fill="#ae0fbe"/><rect x="1153.24" y="583.12" width="3.89" height="1.88" fill="#ae0fbe"/><rect x="1157.08" y="584.38" width="3.89" height="2.25" fill="#ae0fbe"/><rect x="1160.92" y="562.75" width="3.89" height="2.88" fill="#ae0fbe"/><rect x="1164.75" y="560.38" width="3.89" height="4.25" fill="#ae0fbe"/><rect x="1168.59" y="581.88" width="3.89" height="3.12" fill="#ae0fbe"/><rect x="1176.26" y="584.38" width="3.89" height="0.88" fill="#ae0fbe"/><rect x="1180.10" y="583.12" width="3.89" height="3.12" fill="#ae0fbe"/><rect x="1183.94" y="581.88" width="3.89" height="3.75" fill="#ae0fbe"/><rect x="1187.77" y="577.50" width="3.89" height="3.12" fill="#ae0fbe"/><rect x="1191.61" y="582.12" width="3.89" height="3.12" fill="#ae0fbe"/><rect x="1195.44" y="576.25" width="3.89" height="4.38" fill="#ae0fbe"/><rect x="1199.28" y="585.25" width="3.89" height="1.88" fill="#ae0fbe"/><rect x="1203.12" y="583.38" width="3.89" height="2.88" fill="#ae0fbe"/><rect x="1206.95" y="574.12" width="3.89" height="4.25" fill="#ae0fbe"/><rect x="1210.79" y="580.88" width="3.89" height="3.50" fill="#ae0fbe"/><rect x="1214.63" y="581.88" width="3.89" height="3.12" fill="#ae0fbe"/><rect x="1218.46" y="583.12" width="3.89" height="2.50" fill="#ae0fbe"/><rect x="144.26" y="586.88" width="3.89" height="2.50" fill="#f4430f"/><rect x="144.26" y="584.38" width="3.89" height="1.88" fill="#1f6feb"/><rect x="151.93" y="587.25" width="3.89" height="2.12" fill="#f4430f"/><rect x="151.93" y="585.00" width="3.89" height="1.50" fill="#1f6feb"/><rect x="171.11" y="588.10" width="3.89" height="1.90" fill="#7b96de"/><rect x="174.95" y="588.10" width="3.89" height="1.90" fill="#7b96de"/><rect x="178.78" y="587.50" width="3.89" height="1.88" fill="#f4430f"/><rect x="178.78" y="585.25" width="3.89" height="1.62" fill="#1f6feb"/><rect x="186.46" y="588.10" width="3.89" height="1.90" fill="#7b96de"/><rect x="236.33" y="588.10" width="3.89" height="1.90" fill="#7b96de"/><rect x="240.17" y="586.88" width="3.89" height="2.50" fill="#f4430f"/><rect x="240.17" y="583.12" width="3.89" height="3.12" fill="#1f6feb"/><rect x="244.00" y="586.50" width="3.89" height="1.62" fill="#1f6feb"/><rect x="247.84" y="588.10" width="3.89" height="1.90" fill="#7b96de"/><rect x="251.68" y="588.10" width="3.89" height="1.90" fill="#7b96de"/><rect x="286.20" y="588.10" width="3.89" height="1.90" fill="#7b96de"/><rect x="320.73" y="588.10" width="3.89" height="1.90" fill="#7b96de"/><rect x="324.57" y="588.10" width="3.89" height="1.90" fill="#7b96de"/><rect x="332.24" y="586.25" width="3.89" height="3.12" fill="#f4430f"/><rect x="332.24" y="581.88" width="3.89" height="3.12" fill="#1f6feb"/><rect x="343.75" y="588.12" width="3.89" height="1.25" fill="#f4430f"/><rect x="343.75" y="585.62" width="3.89" height="1.25" fill="#1f6feb"/><rect x="347.59" y="588.10" width="3.89" height="1.90" fill="#7b96de"/><rect x="424.32" y="577.50" width="3.89" height="12.12" fill="#1f6feb"/><rect x="516.39" y="588.10" width="3.89" height="1.90" fill="#7b96de"/><rect x="527.90" y="588.75" width="3.89" height="1.25" fill="#1f6feb"/><rect x="531.74" y="587.88" width="3.89" height="2.12" fill="#1f6feb"/><rect x="535.57" y="587.88" width="3.89" height="2.12" fill="#1f6feb"/><rect x="539.41" y="588.75" width="3.89" height="1.25" fill="#1f6feb"/><rect x="543.25" y="586.62" width="3.89" height="3.38" fill="#1f6feb"/><rect x="547.08" y="586.62" width="3.89" height="3.38" fill="#1f6feb"/><rect x="550.92" y="587.50" width="3.89" height="2.50" fill="#1f6feb"/><rect x="554.76" y="587.50" width="3.89" height="2.50" fill="#1f6feb"/><rect x="558.59" y="587.50" width="3.89" height="2.50" fill="#1f6feb"/><rect x="562.43" y="587.50" width="3.89" height="2.50" fill="#1f6feb"/><rect x="566.27" y="587.50" width="3.89" height="2.50" fill="#1f6feb"/><rect x="570.10" y="587.50" width="3.89" height="2.50" fill="#1f6feb"/><rect x="573.94" y="586.62" width="3.89" height="3.38" fill="#1f6feb"/><rect x="577.77" y="587.50" width="3.89" height="2.50" fill="#1f6feb"/><rect x="704.38" y="587.88" width="3.89" height="1.75" fill="#f4430f"/><rect x="704.38" y="585.25" width="3.89" height="1.88" fill="#1f6feb"/><rect x="712.05" y="588.10" width="3.89" height="1.90" fill="#7b96de"/><rect x="723.56" y="588.10" width="3.89" height="1.90" fill="#7b96de"/><rect x="746.58" y="588.10" width="3.89" height="1.90" fill="#7b96de"/><rect x="750.42" y="588.10" width="3.89" height="1.90" fill="#7b96de"/><rect x="754.25" y="588.10" width="3.89" height="1.90" fill="#7b96de"/><rect x="758.09" y="588.10" width="3.89" height="1.90" fill="#ee8660"/><rect x="761.92" y="588.10" width="3.89" height="1.90" fill="#ee8660"/><rect x="769.60" y="588.10" width="3.89" height="1.90" fill="#7b96de"/><rect x="788.78" y="588.10" width="3.89" height="1.90" fill="#ee8660"/><rect x="792.62" y="588.10" width="3.89" height="1.90" fill="#ee8660"/><rect x="796.45" y="588.10" width="3.89" height="1.90" fill="#ee8660"/><rect x="800.29" y="586.62" width="3.89" height="1.75" fill="#1f6feb"/><rect x="807.96" y="586.62" width="3.89" height="2.75" fill="#1f6feb"/><rect x="811.80" y="585.62" width="3.89" height="4.00" fill="#f4430f"/><rect x="811.80" y="581.88" width="3.89" height="3.12" fill="#1f6feb"/><rect x="815.64" y="581.25" width="3.89" height="8.38" fill="#f4430f"/><rect x="815.64" y="571.88" width="3.89" height="8.75" fill="#1f6feb"/><rect x="819.47" y="586.88" width="3.89" height="2.75" fill="#f4430f"/><rect x="819.47" y="584.38" width="3.89" height="1.88" fill="#1f6feb"/><rect x="823.31" y="588.10" width="3.89" height="1.90" fill="#ee8660"/><rect x="827.14" y="586.62" width="3.89" height="3.00" fill="#f4430f"/><rect x="827.14" y="583.12" width="3.89" height="2.50" fill="#1f6feb"/><rect x="830.98" y="588.10" width="3.89" height="1.90" fill="#ee8660"/><rect x="830.98" y="586.62" width="3.89" height="1.50" fill="#1f6feb"/><rect x="834.82" y="587.88" width="3.89" height="1.75" fill="#f4430f"/><rect x="834.82" y="586.25" width="3.89" height="1.25" fill="#1f6feb"/><rect x="838.65" y="587.88" width="3.89" height="1.75" fill="#f4430f"/><rect x="838.65" y="584.38" width="3.89" height="2.25" fill="#1f6feb"/><rect x="842.49" y="586.62" width="3.89" height="1.50" fill="#1f6feb"/><rect x="846.33" y="585.62" width="3.89" height="4.00" fill="#f4430f"/><rect x="846.33" y="582.12" width="3.89" height="2.88" fill="#1f6feb"/><rect x="850.16" y="588.10" width="3.89" height="1.90" fill="#ee8660"/><rect x="854.00" y="588.10" width="3.89" height="1.90" fill="#ee8660"/><rect x="857.84" y="588.10" width="3.89" height="1.90" fill="#7b96de"/><rect x="861.67" y="588.10" width="3.89" height="1.90" fill="#ee8660"/><rect x="865.51" y="586.62" width="3.89" height="3.00" fill="#f4430f"/><rect x="865.51" y="581.25" width="3.89" height="3.75" fill="#1f6feb"/><rect x="869.35" y="578.75" width="3.89" height="10.88" fill="#f4430f"/><rect x="869.35" y="568.75" width="3.89" height="8.75" fill="#1f6feb"/><rect x="873.18" y="588.10" width="3.89" height="1.90" fill="#ee8660"/><rect x="877.02" y="586.62" width="3.89" height="1.50" fill="#1f6feb"/><rect x="880.86" y="586.62" width="3.89" height="1.50" fill="#1f6feb"/><rect x="888.53" y="588.10" width="3.89" height="1.90" fill="#ee8660"/><rect x="892.36" y="588.12" width="3.89" height="1.50" fill="#f4430f"/><rect x="892.36" y="585.25" width="3.89" height="1.62" fill="#1f6feb"/><rect x="896.20" y="588.10" width="3.89" height="1.90" fill="#ee8660"/><rect x="900.04" y="588.10" width="3.89" height="1.90" fill="#ee8660"/><rect x="903.87" y="588.10" width="3.89" height="1.90" fill="#7b96de"/><rect x="907.71" y="588.10" width="3.89" height="1.90" fill="#7b96de"/><rect x="911.55" y="588.10" width="3.89" height="1.90" fill="#ee8660"/><rect x="915.38" y="588.10" width="3.89" height="1.90" fill="#ee8660"/><rect x="915.38" y="585.00" width="3.89" height="4.62" fill="#f4430f"/><rect x="915.38" y="578.12" width="3.89" height="5.62" fill="#1f6feb"/><rect x="919.22" y="588.10" width="3.89" height="1.90" fill="#ee8660"/><rect x="919.22" y="586.62" width="3.89" height="1.50" fill="#1f6feb"/><rect x="923.06" y="588.10" width="3.89" height="1.90" fill="#ee8660"/><rect x="926.89" y="588.10" width="3.89" height="1.90" fill="#7b96de"/><rect x="930.73" y="588.10" width="3.89" height="1.90" fill="#ee8660"/><rect x="934.57" y="588.10" width="3.89" height="1.90" fill="#7b96de"/><rect x="938.40" y="588.10" width="3.89" height="1.90" fill="#ee8660"/><rect x="942.24" y="588.10" width="3.89" height="1.90" fill="#ee8660"/><rect x="946.07" y="588.10" width="3.89" height="1.90" fill="#ee8660"/><rect x="949.91" y="588.10" width="3.89" height="1.90" fill="#ee8660"/><rect x="953.75" y="588.10" width="3.89" height="1.90" fill="#ee8660"/><rect x="957.58" y="588.10" width="3.89" height="1.90" fill="#ee8660"/><rect x="961.42" y="588.10" width="3.89" height="1.90" fill="#ee8660"/><rect x="965.26" y="588.10" width="3.89" height="1.90" fill="#ee8660"/><rect x="969.09" y="588.10" width="3.89" height="1.90" fill="#7b96de"/><rect x="972.93" y="588.10" width="3.89" height="1.90" fill="#7b96de"/><rect x="976.77" y="588.10" width="3.89" height="1.90" fill="#7b96de"/><rect x="980.60" y="588.10" width="3.89" height="1.90" fill="#7b96de"/><rect x="984.44" y="588.10" width="3.89" height="1.90" fill="#7b96de"/><rect x="988.28" y="588.10" width="3.89" height="1.90" fill="#7b96de"/><rect x="992.11" y="588.10" width="3.89" height="1.90" fill="#7b96de"/><rect x="995.95" y="588.10" width="3.89" height="1.90" fill="#7b96de"/><rect x="1003.62" y="588.10" width="3.89" height="1.90" fill="#7b96de"/><rect x="1007.46" y="587.50" width="3.89" height="2.12" fill="#f4430f"/><rect x="1007.46" y="583.12" width="3.89" height="3.12" fill="#1f6feb"/><rect x="1011.29" y="588.10" width="3.89" height="1.90" fill="#7b96de"/><rect x="1015.13" y="588.10" width="3.89" height="1.90" fill="#7b96de"/><rect x="1018.97" y="588.10" width="3.89" height="1.90" fill="#7b96de"/><rect x="1022.80" y="588.10" width="3.89" height="1.90" fill="#7b96de"/><rect x="1026.64" y="588.10" width="3.89" height="1.90" fill="#7b96de"/><rect x="1030.48" y="588.10" width="3.89" height="1.90" fill="#7b96de"/><rect x="1034.31" y="588.10" width="3.89" height="1.90" fill="#7b96de"/><rect x="1045.82" y="588.10" width="3.89" height="1.90" fill="#7b96de"/><rect x="1049.66" y="588.10" width="3.89" height="1.90" fill="#7b96de"/><rect x="1057.33" y="588.10" width="3.89" height="1.90" fill="#7b96de"/><rect x="1061.17" y="588.10" width="3.89" height="1.90" fill="#7b96de"/><rect x="1068.84" y="588.10" width="3.89" height="1.90" fill="#7b96de"/><rect x="1072.68" y="588.10" width="3.89" height="1.90" fill="#7b96de"/><rect x="1084.19" y="588.10" width="3.89" height="1.90" fill="#7b96de"/><rect x="1091.86" y="588.10" width="3.89" height="1.90" fill="#7b96de"/><rect x="1099.53" y="588.10" width="3.89" height="1.90" fill="#7b96de"/><rect x="1103.37" y="588.10" width="3.89" height="1.90" fill="#7b96de"/><rect x="1107.21" y="588.10" width="3.89" height="1.90" fill="#7b96de"/><rect x="1111.04" y="588.10" width="3.89" height="1.90" fill="#7b96de"/><rect x="1114.88" y="588.10" width="3.89" height="1.90" fill="#7b96de"/><rect x="1118.72" y="588.10" width="3.89" height="1.90" fill="#7b96de"/><rect x="1126.39" y="588.10" width="3.89" height="1.90" fill="#7b96de"/><rect x="1130.22" y="588.10" width="3.89" height="1.90" fill="#ee8660"/><rect x="1134.06" y="588.10" width="3.89" height="1.90" fill="#7b96de"/><rect x="1134.06" y="586.62" width="3.89" height="1.75" fill="#1f6feb"/><rect x="1137.90" y="588.10" width="3.89" height="1.90" fill="#ee8660"/><rect x="1141.73" y="588.10" width="3.89" height="1.90" fill="#7b96de"/><rect x="1145.57" y="588.10" width="3.89" height="1.90" fill="#7b96de"/><rect x="1149.41" y="588.10" width="3.89" height="1.90" fill="#ee8660"/><rect x="1149.41" y="586.62" width="3.89" height="1.75" fill="#1f6feb"/><rect x="1153.24" y="588.10" width="3.89" height="1.90" fill="#7b96de"/><rect x="1157.08" y="588.10" width="3.89" height="1.90" fill="#7b96de"/><rect x="1160.92" y="588.10" width="3.89" height="1.90" fill="#7b96de"/><rect x="1164.75" y="588.10" width="3.89" height="1.90" fill="#7b96de"/><rect x="1168.59" y="588.10" width="3.89" height="1.90" fill="#7b96de"/><rect x="1172.43" y="588.10" width="3.89" height="1.90" fill="#7b96de"/><rect x="1176.26" y="588.10" width="3.89" height="1.90" fill="#7b96de"/><rect x="1180.10" y="588.10" width="3.89" height="1.90" fill="#7b96de"/><rect x="1183.94" y="588.10" width="3.89" height="1.90" fill="#ee8660"/><rect x="1191.61" y="588.10" width="3.89" height="1.90" fill="#ee8660"/></g><g shape-rendering="auto"><path d="M116.5 463V591" stroke="#666" stroke-width="1.5" fill="none"/><path d="M116 590.6H1227" stroke="#858585" stroke-width="1.3" fill="none"/><path d="M251.3 590V598" stroke="#707070" stroke-width="1.1"/><path d="M389.5 590V598" stroke="#707070" stroke-width="1.1"/><path d="M527.6 590V598" stroke="#707070" stroke-width="1.1"/><path d="M665.8 590V598" stroke="#707070" stroke-width="1.1"/><path d="M803.9 590V598" stroke="#707070" stroke-width="1.1"/><path d="M942.0 590V598" stroke="#707070" stroke-width="1.1"/><path d="M1080.2 590V598" stroke="#707070" stroke-width="1.1"/><path d="M1218.4 590V598" stroke="#707070" stroke-width="1.1"/><path d="M109 481.2H116" stroke="#707070" stroke-width="1.1"/><path d="M109 535.6H116" stroke="#707070" stroke-width="1.1"/><path d="M109 590.2H116" stroke="#707070" stroke-width="1.1"/></g><g shape-rendering="auto" font-family="Liberation Sans, sans-serif" font-size="11.5" fill="#666" stroke="#666" stroke-width="0.3"><text x="251.3" y="610.3" text-anchor="middle">20:59</text><text x="389.5" y="610.3" text-anchor="middle">23:59</text><text x="527.6" y="610.3" text-anchor="middle">06-22 02:59</text><text x="665.8" y="610.3" text-anchor="middle">05:59</text><text x="803.9" y="610.3" text-anchor="middle">08:59</text><text x="942.0" y="610.3" text-anchor="middle">11:59</text><text x="1080.2" y="610.3" text-anchor="middle">14:59</text><text x="1218.4" y="610.3" text-anchor="middle">17:59</text><text x="105.5" y="483.8" text-anchor="end">4M</text><text x="105.5" y="538.2" text-anchor="end">2M</text><text x="105.5" y="592.8" text-anchor="end">0M</text><text transform="translate(57.5,526.5) rotate(-90)" text-anchor="middle" font-size="13">bits/s</text></g></svg>
<div id="tx" style="position:absolute;left:0;top:0;width:1600px;height:873px;will-change:transform">
<span class="t" style="left:19.94px;top:12.00px;font-size:16px;color:#f1f4f6;transform:scaleX(0.9826);font-weight:bold;-webkit-text-stroke:0.25px">Dashboard</span>
<span class="t" style="left:141.94px;top:12.00px;font-size:16px;color:#ffffff;transform:scaleX(1.0028);font-weight:bold;-webkit-text-stroke:0.25px">Reports</span>
<span class="t" style="left:242.44px;top:12.00px;font-size:16px;color:#f1f4f6;transform:scaleX(0.9976);font-weight:bold;-webkit-text-stroke:0.25px">Configuration</span>
<span class="t" style="left:1238.14px;top:13.00px;font-size:16px;color:#e9eef1;transform:scaleX(0.9590);font-weight:bold;-webkit-text-stroke:0.25px">Notifications</span>
<span class="t" style="left:1349.00px;top:13.00px;font-size:16px;color:#a9b5bb;transform:scaleX(1.0105);font-weight:bold;-webkit-text-stroke:0.25px">0</span>
<span class="t" style="left:1411.94px;top:12.00px;font-size:16px;color:#f1f4f6;transform:scaleX(0.9366);font-weight:bold;-webkit-text-stroke:0.25px">English</span>
<span class="t" style="left:1510.14px;top:12.00px;font-size:16px;color:#f1f4f6;transform:scaleX(0.9636);font-weight:bold;-webkit-text-stroke:0.25px">demo</span>
<span class="t" style="left:22.16px;top:64.00px;font-size:24px;color:#ffffff;transform:scaleX(0.9062);font-weight:bold;-webkit-text-stroke:0.4px">Reports</span>
<span class="t" style="left:148.16px;top:64.00px;font-size:24px;color:#d6dee4;transform:scaleX(0.9053);font-weight:bold;-webkit-text-stroke:0.4px">Chapters</span>
<span class="t" style="left:286.16px;top:64.00px;font-size:24px;color:#d6dee4;transform:scaleX(0.8970);font-weight:bold;-webkit-text-stroke:0.4px">Schedules</span>
<span class="t" style="left:35.84px;top:126.00px;font-size:33px;color:#37434e;transform:scaleX(0.9284);font-weight:bold;-webkit-text-stroke:0.4px">TLS (Total traffic)</span>
<span class="t" style="left:1496.24px;top:138.00px;font-size:16px;color:#ffffff;transform:scaleX(0.9495);font-weight:bold;-webkit-text-stroke:0.25px">Back</span>
<span class="t" style="left:48.44px;top:193.00px;font-size:16px;color:#3fa3b9;transform:scaleX(0.9526);font-weight:bold;-webkit-text-stroke:0.25px">Report</span>
<span class="t" style="left:121.44px;top:193.00px;font-size:16px;color:#2f3f49;transform:scaleX(0.9435);font-weight:bold;-webkit-text-stroke:0.25px">Schedule</span>
<span class="t" style="left:50.44px;top:274.00px;font-size:16px;color:#1e2c35;transform:scaleX(1.0120);-webkit-text-stroke:0.4px">Last 24 hours</span>
<span class="t" style="left:353.44px;top:274.00px;font-size:16px;color:#ffffff;transform:scaleX(0.9440);font-weight:bold;-webkit-text-stroke:0.25px">Show report</span>
<span class="t" style="left:515.44px;top:274.00px;font-size:16px;color:#348ba5;transform:scaleX(0.9299);font-weight:bold;-webkit-text-stroke:0.25px">Export</span>
<span class="t" style="left:50.44px;top:346.00px;font-size:16px;color:#26343d;transform:scaleX(0.9459);font-weight:bold;-webkit-text-stroke:0.25px">TLS versions (Total traffic)</span>
<span class="t" style="left:54.98px;top:386.00px;font-size:15px;color:#1e2c35;transform:scaleX(0.9567);font-weight:bold;-webkit-text-stroke:0.25px">Time Interval:</span>
<span class="t" style="left:150.47px;top:386.00px;font-size:15px;color:#1e2c35;transform:scaleX(0.9674);-webkit-text-stroke:0.4px">2021-06-21 18:07 - 2021-06-22 18:07</span>
<span class="t" style="left:54.98px;top:413.00px;font-size:15px;color:#1e2c35;transform:scaleX(0.9830);-webkit-text-stroke:0.4px">This chapter shows versions of TLS used in your network.</span>
<span class="t" style="left:1289.33px;top:360.00px;font-size:13.5px;color:#7f9099;transform:scaleX(0.9544);font-weight:bold;-webkit-text-stroke:0.25px">Chapters</span>
<span class="t" style="left:1289.24px;top:393.00px;font-size:16px;color:#26343d;transform:scaleX(0.9464);font-weight:bold;-webkit-text-stroke:0.25px">TLS versions (Total traffic)</span>
<span class="t" style="left:1289.24px;top:429.00px;font-size:16px;color:#2f3f49;transform:scaleX(0.9768);-webkit-text-stroke:0.4px">TLS version 1.0 IP addresses (Total…</span>
<span class="t" style="left:1289.24px;top:465.00px;font-size:16px;color:#2f3f49;transform:scaleX(1.0057);-webkit-text-stroke:0.4px">SSL IP addresses (Total traffic)</span>
<span class="t" style="left:1289.24px;top:502.00px;font-size:16px;color:#2f3f49;transform:scaleX(0.9783);-webkit-text-stroke:0.4px">TLS Issuer Common Name (Total tr…</span>
<span class="t" style="left:1289.24px;top:538.00px;font-size:16px;color:#2f3f49;transform:scaleX(1.0018);-webkit-text-stroke:0.4px">TLS Client Key Length (Total traffic)</span>
<span class="t" style="left:1289.24px;top:575.00px;font-size:16px;color:#2f3f49;transform:scaleX(1.0151);-webkit-text-stroke:0.4px">TLS JA3 Fingerprints (Total traffic)</span>
<span class="t" style="left:1289.24px;top:611.00px;font-size:16px;color:#2f3f49;transform:scaleX(1.0141);-webkit-text-stroke:0.4px">TLS ALPN (Total traffic)</span>
<span class="t" style="left:127.71px;top:648.00px;font-size:14px;color:#7a8b94;transform:scaleX(0.9142);font-weight:bold;-webkit-text-stroke:0.25px">TLS versions</span>
<span class="t" style="left:852.11px;top:648.00px;font-size:14px;color:#7a8b94;transform:scaleX(0.9569);font-weight:bold;-webkit-text-stroke:0.25px">Maximal bits/s</span>
<span class="t" style="left:1013.81px;top:648.00px;font-size:14px;color:#7a8b94;transform:scaleX(0.9129);font-weight:bold;-webkit-text-stroke:0.25px">Bits per second</span>
<span class="t" style="left:1197.01px;top:648.00px;font-size:14px;color:#7a8b94;transform:scaleX(0.9093);font-weight:bold;-webkit-text-stroke:0.25px">Bytes</span>
<span class="t" style="left:127.64px;top:701.00px;font-size:16px;color:#1e2c35;transform:scaleX(0.9695);-webkit-text-stroke:0.4px">TLS 1.2</span>
<span class="t" style="left:902.84px;top:701.00px;font-size:16px;color:#1e2c35;transform:scaleX(1.0226);-webkit-text-stroke:0.4px">3.5 M</span>
<span class="t" style="left:1055.14px;top:701.00px;font-size:16px;color:#1e2c35;transform:scaleX(0.9903);-webkit-text-stroke:0.4px">376.3 K</span>
<span class="t" style="left:1172.04px;top:701.00px;font-size:16px;color:#1e2c35;transform:scaleX(0.9591);-webkit-text-stroke:0.4px">3.79 GiB</span>
<span class="t" style="left:84.58px;top:703.00px;font-size:13px;color:#ffffff;transform:scaleX(1.0000);font-weight:bold;-webkit-text-stroke:0.25px">1</span>
<span class="t" style="left:127.64px;top:747.00px;font-size:16px;color:#1e2c35;transform:scaleX(0.9695);-webkit-text-stroke:0.4px">TLS 1.0</span>
<span class="t" style="left:889.04px;top:747.00px;font-size:16px;color:#1e2c35;transform:scaleX(0.9921);-webkit-text-stroke:0.4px">395.1 K</span>
<span class="t" style="left:1055.14px;top:747.00px;font-size:16px;color:#1e2c35;transform:scaleX(0.9903);-webkit-text-stroke:0.4px">123.2 K</span>
<span class="t" style="left:1172.04px;top:747.00px;font-size:16px;color:#1e2c35;transform:scaleX(0.9591);-webkit-text-stroke:0.4px">1.24 GiB</span>
<span class="t" style="left:84.58px;top:749.00px;font-size:13px;color:#ffffff;transform:scaleX(1.0000);font-weight:bold;-webkit-text-stroke:0.25px">2</span>
<span class="t" style="left:127.64px;top:793.00px;font-size:16px;color:#1e2c35;transform:scaleX(0.9695);-webkit-text-stroke:0.4px">TLS 1.3</span>
<span class="t" style="left:889.04px;top:793.00px;font-size:16px;color:#1e2c35;transform:scaleX(0.9921);-webkit-text-stroke:0.4px">475.5 K</span>
<span class="t" style="left:1064.24px;top:793.00px;font-size:16px;color:#1e2c35;transform:scaleX(0.9839);-webkit-text-stroke:0.4px">27.3 K</span>
<span class="t" style="left:1150.94px;top:793.00px;font-size:16px;color:#1e2c35;transform:scaleX(0.9985);-webkit-text-stroke:0.4px">281.60 MiB</span>
<span class="t" style="left:84.58px;top:795.00px;font-size:13px;color:#ffffff;transform:scaleX(1.0000);font-weight:bold;-webkit-text-stroke:0.25px">3</span>
<span class="t" style="left:127.64px;top:839.00px;font-size:16px;color:#1e2c35;transform:scaleX(0.9373);-webkit-text-stroke:0.4px">TLS 1.1</span>
<span class="t" style="left:902.84px;top:839.00px;font-size:16px;color:#1e2c35;transform:scaleX(1.0218);-webkit-text-stroke:0.4px">314.0</span>
<span class="t" style="left:1086.64px;top:839.00px;font-size:16px;color:#1e2c35;transform:scaleX(1.0391);-webkit-text-stroke:0.4px">3.5</span>
<span class="t" style="left:1163.44px;top:839.00px;font-size:16px;color:#1e2c35;transform:scaleX(1.0017);-webkit-text-stroke:0.4px">37.11 KiB</span>
<span class="t" style="left:84.58px;top:842.00px;font-size:13px;color:#ffffff;transform:scaleX(1.0000);font-weight:bold;-webkit-text-stroke:0.25px">4</span>
</div>
</body>
</html>
